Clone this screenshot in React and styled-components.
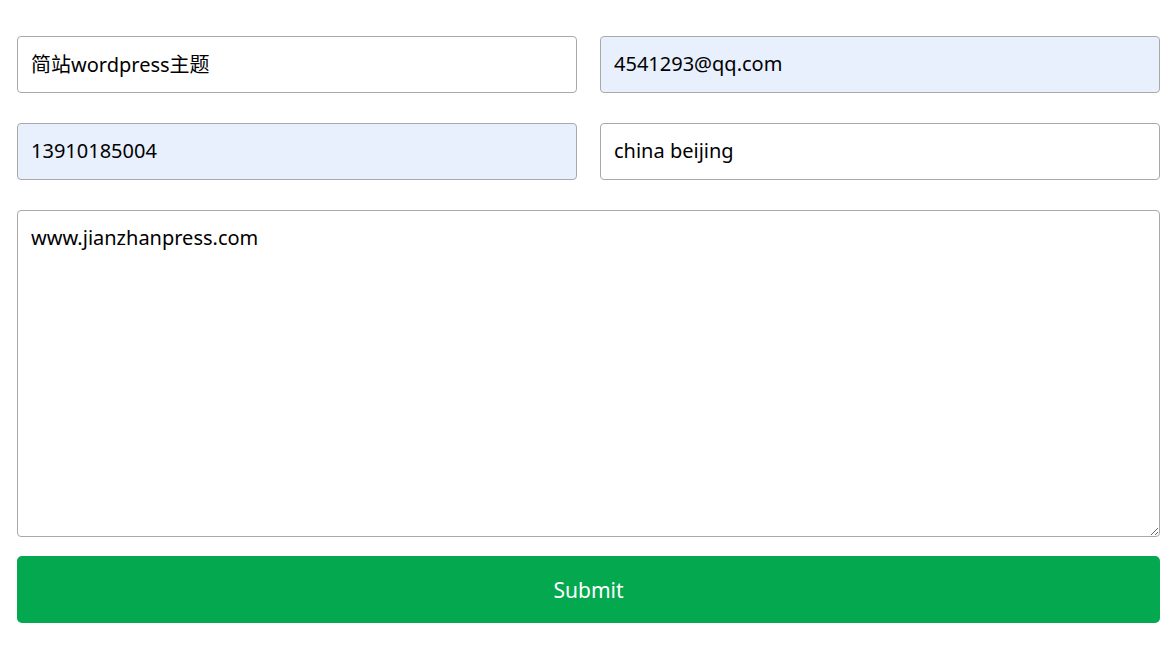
import React from "react";
import styled, { createGlobalStyle } from "styled-components";

const GlobalStyle = createGlobalStyle`
  body {
    margin: 0;
    background: #fff;
    font-family: "Noto Sans", "Noto Sans CJK SC", sans-serif;
  }
`;

const Form = styled.form`
  padding: 36px 16px 0 17px;
  display: flex;
  flex-direction: column;
`;

const Grid = styled.div`
  display: grid;
  grid-template-columns: 1fr 1fr;
  column-gap: 23px;
  row-gap: 30px;
`;

const Input = styled.input`
  box-sizing: border-box;
  height: 57px;
  width: 100%;
  padding: 0 13px 3px;
  border: 1px solid #a9a9a9;
  border-radius: 4px;
  font-family: inherit;
  font-size: 20px;
  color: #000;
  background: ${(p) => (p.$filled ? "#e8f0fe" : "#fff")};
  outline: none;
`;

const TextArea = styled.textarea`
  box-sizing: border-box;
  margin-top: 30px;
  height: 327px;
  width: 100%;
  padding: 13px 13px;
  border: 1px solid #a9a9a9;
  border-radius: 4px;
  font-family: inherit;
  font-size: 20px;
  color: #000;
  outline: none;
`;

const Submit = styled.button`
  margin-top: 19px;
  height: 67px;
  width: 100%;
  border: none;
  border-radius: 5px;
  background: #04a84e;
  color: #fff;
  font-family: inherit;
  font-size: 21px;
  cursor: pointer;
`;

const App = () => {
  return (
    <>
      <GlobalStyle />
      <Form onSubmit={(e) => e.preventDefault()}>
        <Grid>
          <Input defaultValue="简站wordpress主题" />
          <Input $filled defaultValue="4541293@qq.com" />
          <Input $filled defaultValue="13910185004" />
          <Input defaultValue="china beijing" />
        </Grid>
        <TextArea defaultValue="www.jianzhanpress.com" />
        <Submit type="submit">Submit</Submit>
      </Form>
    </>
  );
};

export default App;
